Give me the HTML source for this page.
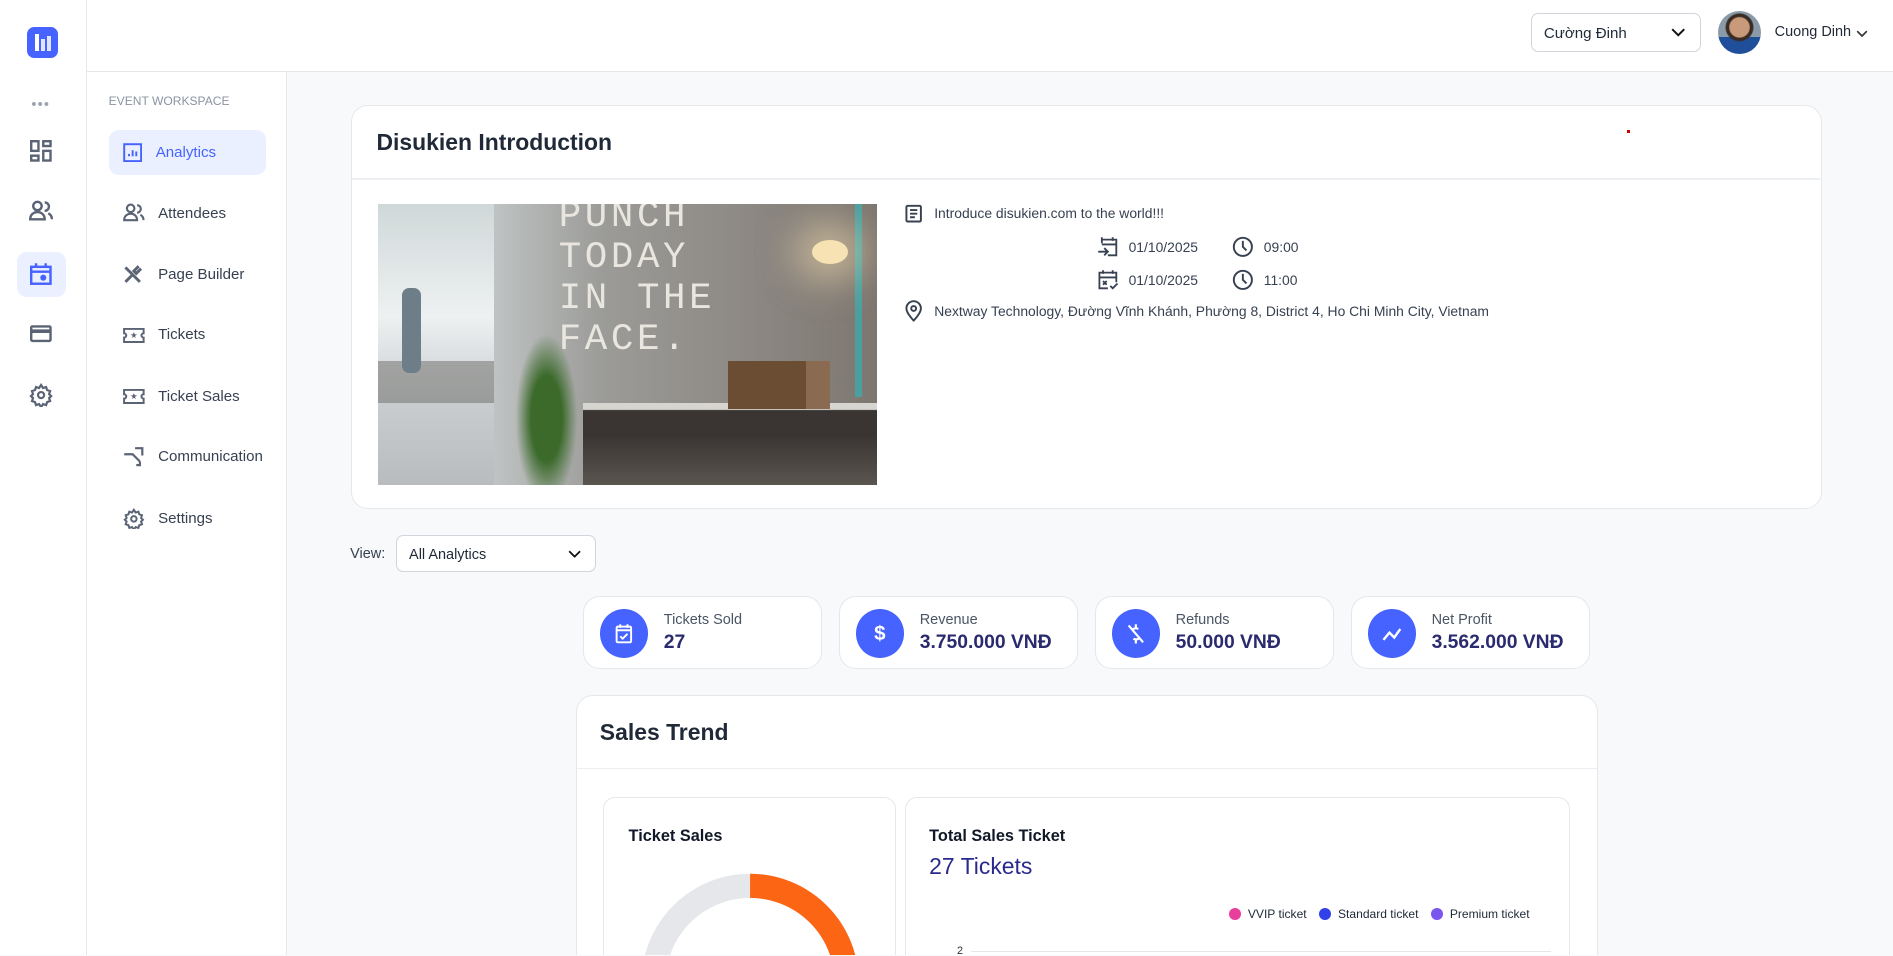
<!DOCTYPE html>
<html><head><meta charset="utf-8"><style>
html{zoom:1.20727;background:#f8f9fb;overflow:hidden}
*{box-sizing:border-box;margin:0;padding:0}
body{background:#f8f9fb;font-family:"Liberation Sans","Noto Sans CJK SC",sans-serif;color:#1f2937;overflow:hidden;height:791px}
#w{width:1568px;height:791px;overflow:hidden;position:relative;background:#f8f9fb}
.abs{position:absolute}
.rail{left:0;top:0;width:72px;height:792px;background:#fff;border-right:1px solid #e5e7eb}
.top{left:72px;top:0;width:1496px;height:60px;background:#fff;border-bottom:1px solid #e5e7eb}
.side{left:72px;top:60px;width:166px;height:732px;background:#fff;border-right:1px solid #e5e7eb}
.nav{position:absolute;left:18px;width:130px;height:37px;border-radius:8px;display:flex;align-items:center;font-size:12.5px;color:#374151}
.nav svg{margin-left:12px;margin-right:11px}
.card{background:#fff;border:1px solid #e5e7eb;border-radius:14px}
.stat{top:494px;width:198px;height:60px}
.stat .ic{position:absolute;left:13px;top:10px;width:40px;height:40px;border-radius:50%;background:#4763ff;display:flex;align-items:center;justify-content:center}
.stat .l{position:absolute;left:66px;top:12px;font-size:12px;color:#4b5563}
.stat .v{position:absolute;left:66px;top:29px;font-size:16px;font-weight:bold;color:#2a2a6e}
.info{font-size:11.5px;color:#374151;display:flex;align-items:center}
</style></head><body><div id="w">
<div class="abs rail">
 <div class="abs" style="left:22px;top:22px;width:26px;height:26px;background:#4763ff;border-radius:6px">
  <div class="abs" style="left:7px;top:6px;width:3px;height:14px;background:#fff"></div>
  <div class="abs" style="left:12px;top:10px;width:3px;height:10px;background:#dfe4ff"></div>
  <div class="abs" style="left:17px;top:8px;width:3px;height:12px;background:#dfe4ff"></div>
 </div>
 <div class="abs" style="left:26px;top:80px;font-size:12px;color:#9ca3af;letter-spacing:1px">•••</div>
 <svg class="abs" style="left:25px;top:116px" width="18" height="18" viewBox="0 0 18 18" fill="none" stroke="#5b6475" stroke-width="2"><rect x="1" y="1" width="6" height="8"/><rect x="11" y="1" width="6" height="4"/><rect x="1" y="13" width="6" height="4"/><rect x="11" y="9" width="6" height="8"/></svg>
 <svg class="abs" style="left:24px;top:166px" width="20" height="18" viewBox="0 0 20 18" fill="none" stroke="#5b6475" stroke-width="2"><circle cx="7" cy="5" r="3.5"/><path d="M1 16c0-4 3-6 6-6s6 2 6 6zM13 2a3.5 3.5 0 0 1 0 7M16 11c2 1 3 3 3 5"/></svg>
 <div class="abs" style="left:14px;top:209px;width:41px;height:37px;border-radius:8px;background:#eaf0ff"></div>
 <svg class="abs" style="left:25px;top:217px" width="18" height="20" viewBox="0 0 18 20" fill="none" stroke="#4763ff" stroke-width="2"><rect x="1" y="4" width="16" height="14"/><path d="M1 8h16M5 1v4M13 1v4"/><circle cx="11" cy="13" r="1.5" fill="#4763ff"/></svg>
 <svg class="abs" style="left:25px;top:268px" width="18" height="16" viewBox="0 0 18 16" fill="none" stroke="#5b6475" stroke-width="2"><rect x="1" y="2" width="16" height="12" rx="1"/><path d="M1 6h16" stroke-width="3"/></svg>
 <svg class="abs" style="left:24px;top:317px" width="20" height="20" viewBox="0 0 24 24" fill="none" stroke="#5b6475" stroke-width="2.2"><circle cx="12" cy="12" r="3"/><path d="M12 2l2 3 3-1 1 3 3 1-1 3 2 2-2 2 1 3-3 1-1 3-3-1-2 3-2-3-3 1-1-3-3-1 1-3-2-2 2-2-1-3 3-1 1-3 3 1z"/></svg>
</div>
<div class="abs top">
 <div class="abs" style="left:1196px;top:11px;width:141px;height:32px;border:1px solid #d1d5db;border-radius:6px;font-size:12.5px;padding:9px 10px;color:#1f2937">Cường Đinh
 <svg class="abs" style="right:12px;top:11px" width="12" height="8" viewBox="0 0 12 8"><path d="M1 1l5 5 5-5" fill="none" stroke="#111" stroke-width="1.6"/></svg></div>
 <div class="abs" style="left:1351px;top:9px;width:36px;height:36px;border-radius:50%;background:radial-gradient(circle at 50% 38%,#c99a7a 0 8px,#3a2b25 9px 11px,transparent 12px),linear-gradient(#8a9aa8 0 60%,#1f4f9a 60%)"></div>
 <div class="abs" style="left:1398px;top:20px;font-size:12px">Cuong Dinh</div>
 <svg class="abs" style="left:1465px;top:25px" width="10" height="6" viewBox="0 0 10 6"><path d="M1 1l4 4 4-4" fill="none" stroke="#333" stroke-width="1.4"/></svg>
</div>
<div class="abs side">
 <div class="abs" style="left:18px;top:18px;font-size:10px;color:#8b93a1">EVENT WORKSPACE</div>
 <div class="nav" style="top:48px;background:#eaf0ff;color:#4763ff"><svg width="16" height="16" viewBox="0 0 16 16" fill="none" stroke="#4763ff" stroke-width="1.6"><rect x="1" y="1" width="14" height="14"/><path d="M5 11V9M8 11V6M11 11V7"/></svg>Analytics</div>
 <div class="nav" style="top:98px"><svg width="18" height="16" viewBox="0 0 20 18" fill="none" stroke="#5b6475" stroke-width="2"><circle cx="7" cy="5" r="3.5"/><path d="M1 16c0-4 3-6 6-6s6 2 6 6zM13 2a3.5 3.5 0 0 1 0 7M16 11c2 1 3 3 3 5"/></svg>Attendees</div>
 <div class="nav" style="top:149px"><svg width="18" height="16" viewBox="0 0 18 16" fill="none" stroke="#5b6475" stroke-width="2.4"><path d="M2 2l12 12M13 1l-4 4 2 2 4-4M2 14l6-6"/></svg>Page Builder</div>
 <div class="nav" style="top:199px"><svg width="18" height="14" viewBox="0 0 20 14" fill="none" stroke="#5b6475" stroke-width="1.8"><path d="M1 1h18v4a2 2 0 0 0 0 4v4H1V9a2 2 0 0 0 0-4z"/><path d="M10 4l1 2h2l-2 1.5 1 2-2-1.3-2 1.3 1-2L7 6h2z" fill="#5b6475" stroke="none"/></svg>Tickets</div>
 <div class="nav" style="top:250px"><svg width="18" height="14" viewBox="0 0 20 14" fill="none" stroke="#5b6475" stroke-width="1.8"><path d="M1 1h18v4a2 2 0 0 0 0 4v4H1V9a2 2 0 0 0 0-4z"/><path d="M10 4l1 2h2l-2 1.5 1 2-2-1.3-2 1.3 1-2L7 6h2z" fill="#5b6475" stroke="none"/></svg>Ticket Sales</div>
 <div class="nav" style="top:300px"><svg width="18" height="16" viewBox="0 0 18 16" fill="none" stroke="#5b6475" stroke-width="1.8"><path d="M1 6h7l6 6M10 1h6v6M14 12v3h-3"/></svg>Communication</div>
 <div class="nav" style="top:351px"><svg width="18" height="18" viewBox="0 0 24 24" fill="none" stroke="#5b6475" stroke-width="2.2"><circle cx="12" cy="12" r="3"/><path d="M12 2l2 3 3-1 1 3 3 1-1 3 2 2-2 2 1 3-3 1-1 3-3-1-2 3-2-3-3 1-1-3-3-1 1-3-2-2 2-2-1-3 3-1 1-3 3 1z"/></svg>Settings</div>
</div>

<div class="abs card" style="left:291px;top:87px;width:1218px;height:335px">
 <div class="abs" style="left:20px;top:19px;font-size:19px;font-weight:bold;color:#1f2937">Disukien Introduction</div>
 <div class="abs" style="left:0;top:60px;width:1216px;height:1px;background:#eceef2"></div>
 <div class="abs" style="left:1056px;top:20px;width:2px;height:2px;background:#c00"></div>
 <div class="abs" style="left:21px;top:81px;width:414px;height:233px;overflow:hidden;background:linear-gradient(90deg,#e8ecef 0 22%,#bfc3c3 23%,#9b9b98 45%,#8f8b86 70%,#7d7770 100%)">
  <div class="abs" style="left:0;top:0;width:96px;height:233px;background:linear-gradient(#cfd8d8,#eef1f2 40%,#c9cdcf 70%,#b9bcbe)"></div>
  <div class="abs" style="left:0;top:130px;width:96px;height:35px;background:#7b7b78;opacity:.6"></div>
  <div class="abs" style="left:20px;top:70px;width:16px;height:70px;background:#6e7e88;border-radius:6px"></div>
  <div class="abs" style="left:150px;top:-6px;font-family:'Liberation Mono',monospace;font-size:31px;line-height:34px;color:#e9e6df;letter-spacing:3px">PUNCH<br>TODAY<br>IN THE<br>FACE.</div>
  <div class="abs" style="left:110px;top:95px;width:60px;height:138px;background:radial-gradient(ellipse at 50% 60%,#3b6a2a 0 30%,transparent 60%)"></div>
  <div class="abs" style="left:170px;top:165px;width:244px;height:68px;background:linear-gradient(#d7d5d0 0 8%,#3a3533 9% 40%,#5b5550 100%)"></div>
  <div class="abs" style="left:290px;top:130px;width:80px;height:40px;background:#6b4d33"></div>
  <div class="abs" style="left:355px;top:130px;width:20px;height:40px;background:#8a6a50"></div>
  <div class="abs" style="left:395px;top:0;width:6px;height:160px;background:#4aa0a0"></div>
  <div class="abs" style="left:360px;top:30px;width:30px;height:20px;border-radius:50%;background:#f6e2b2;box-shadow:0 0 30px 15px rgba(255,230,180,.5)"></div>
 </div>
 <div class="abs info" style="left:457px;top:81px"><svg width="16" height="16" viewBox="0 0 16 16" fill="none" stroke="#374151" stroke-width="1.6"><rect x="2" y="1.5" width="12" height="13" rx="1"/><path d="M5 5h6M5 8h6M5 11h4"/></svg><span style="margin-left:9px">Introduce disukien.com to the world!!!</span></div>
 <div class="abs info" style="left:617px;top:108px"><svg width="18" height="18" viewBox="0 0 18 18" fill="none" stroke="#374151" stroke-width="1.5"><path d="M4 6V3h12v13H9M4 3v-2M13 1v3M4 7h12M1 13h7M6 10l3 3-3 3"/></svg><span style="margin-left:8px">01/10/2025</span></div>
 <div class="abs info" style="left:729px;top:108px"><svg width="18" height="18" viewBox="0 0 18 18" fill="none" stroke="#374151" stroke-width="1.6"><circle cx="9" cy="9" r="7.5"/><path d="M9 4v5l3 3"/></svg><span style="margin-left:8px">09:00</span></div>
 <div class="abs info" style="left:617px;top:135px"><svg width="18" height="18" viewBox="0 0 18 18" fill="none" stroke="#374151" stroke-width="1.5"><path d="M9 16H2V3h14v8M5 1v3M13 1v3M2 7h14M5 10l3 3M8 10l-3 3M11 14l2 2 4-4"/></svg><span style="margin-left:8px">01/10/2025</span></div>
 <div class="abs info" style="left:729px;top:135px"><svg width="18" height="18" viewBox="0 0 18 18" fill="none" stroke="#374151" stroke-width="1.6"><circle cx="9" cy="9" r="7.5"/><path d="M9 4v5l3 3"/></svg><span style="margin-left:8px">11:00</span></div>
 <div class="abs info" style="left:457px;top:161px"><svg width="16" height="18" viewBox="0 0 16 18" fill="none" stroke="#374151" stroke-width="1.6"><path d="M8 17s6-6 6-10A6 6 0 0 0 2 7c0 4 6 10 6 10z"/><circle cx="8" cy="7" r="2"/></svg><span style="margin-left:9px">Nextway Technology, Đường Vĩnh Khánh, Phường 8, District 4, Ho Chi Minh City, Vietnam</span></div>
</div>

<div class="abs" style="left:290px;top:452px;font-size:12px;color:#374151">View:</div>
<div class="abs" style="left:328px;top:443px;width:166px;height:31px;background:#fff;border:1px solid #d1d5db;border-radius:6px;font-size:12px;padding:9px 10px;color:#1f2937">All Analytics
 <svg class="abs" style="right:12px;top:12px" width="11" height="7" viewBox="0 0 11 7"><path d="M1 1l4.5 4.5L10 1" fill="none" stroke="#111" stroke-width="1.5"/></svg></div>

<div class="abs card stat" style="left:483px"><div class="ic"><svg width="18" height="18" viewBox="0 0 18 18" fill="none" stroke="#fff" stroke-width="1.6"><rect x="3" y="3" width="12" height="13" rx="1"/><path d="M6 1v3M12 1v3M3 6h12M6 11l2 2 4-4"/></svg></div><div class="l">Tickets Sold</div><div class="v">27</div></div>
<div class="abs card stat" style="left:695px"><div class="ic"><span style="color:#fff;font-size:17px;font-weight:bold">$</span></div><div class="l">Revenue</div><div class="v">3.750.000 VNĐ</div></div>
<div class="abs card stat" style="left:907px"><div class="ic"><svg width="18" height="18" viewBox="0 0 18 18" fill="none" stroke="#fff" stroke-width="1.8"><path d="M3 2l12 14M11 5a3 2 0 0 0-5 1M7 13a3 2 0 0 0 5-1M9 1v3M9 14v3"/></svg></div><div class="l">Refunds</div><div class="v">50.000 VNĐ</div></div>
<div class="abs card stat" style="left:1119px"><div class="ic"><svg width="18" height="18" viewBox="0 0 18 18" fill="none" stroke="#fff" stroke-width="2"><path d="M2 14l5-6 4 4 5-7"/></svg></div><div class="l">Net Profit</div><div class="v">3.562.000 VNĐ</div></div>

<div class="abs card" style="left:477px;top:576px;width:847px;height:240px">
 <div class="abs" style="left:19px;top:19px;font-size:19px;font-weight:bold;color:#1f2937">Sales Trend</div>
 <div class="abs" style="left:0;top:59px;width:845px;height:1px;background:#eceef2"></div>
 <div class="abs card" style="left:22px;top:83px;width:242px;height:200px;border-radius:10px;overflow:hidden">
  <div class="abs" style="left:20px;top:24px;font-size:13.5px;font-weight:bold;color:#111827">Ticket Sales</div>
  <svg class="abs" style="left:0;top:40px" width="242" height="200" viewBox="0 0 242 200"><circle cx="121" cy="113" r="80" fill="none" stroke="#e5e7eb" stroke-width="20"/><path d="M121 33A80 80 0 0 1 201 113" fill="none" stroke="#fb6514" stroke-width="20"/></svg>
 </div>
 <div class="abs card" style="left:272px;top:83px;width:551px;height:200px;border-radius:10px">
  <div class="abs" style="left:19px;top:24px;font-size:13.5px;font-weight:bold;color:#111827">Total Sales Ticket</div>
  <div class="abs" style="left:19px;top:46px;font-size:19px;color:#2a2a8e">27 Tickets</div>
  <div class="abs" style="left:267px;top:91px;font-size:10px;color:#1f2937;display:flex;align-items:center;white-space:nowrap">
   <span style="width:10px;height:10px;border-radius:50%;background:#e83e9c;margin-right:6px"></span>VVIP ticket
   <span style="width:10px;height:10px;border-radius:50%;background:#3240e8;margin:0 6px 0 10px"></span>Standard ticket
   <span style="width:10px;height:10px;border-radius:50%;background:#7a55f0;margin:0 6px 0 10px"></span>Premium ticket
  </div>
  <div class="abs" style="left:42px;top:122px;font-size:9px;color:#333">2</div>
  <div class="abs" style="left:54px;top:127px;width:480px;height:1px;background:#e5e7eb"></div>
 </div>
</div>
</div></body></html>
